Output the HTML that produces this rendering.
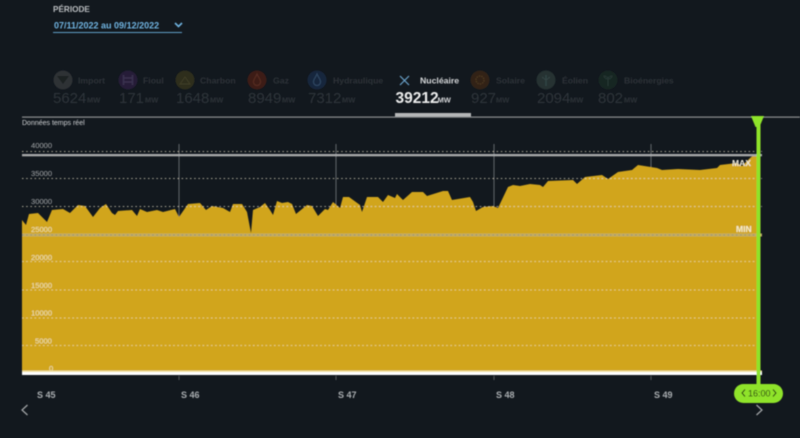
<!DOCTYPE html>
<html lang="fr">
<head>
<meta charset="utf-8">
<style>
html,body{margin:0;padding:0;width:800px;height:438px;overflow:hidden;background:#12181e}
svg{display:block;font-family:"Liberation Sans",sans-serif}
text{white-space:pre}
.lab{font-size:8.700px;font-weight:bold;fill:#2d3338}
.num{font-size:15px;fill:#2f353a}
.mw{font-size:7.500px;font-weight:bold;fill:#2d3338}
.ax{font-size:7.600px;fill:#a3a6a8}
.ax2{font-size:7.600px;fill:#efe3b4}
.wk{font-size:9px;font-weight:bold;fill:#a9adb0}
</style>
</head>
<body>
<svg width="800" height="438" viewBox="0 0 800 438" xmlns="http://www.w3.org/2000/svg">
<defs><filter id="b" x="-5%" y="-5%" width="110%" height="110%"><feGaussianBlur stdDeviation="0.45"/></filter></defs>
<rect width="800" height="438" fill="#12181e"/>
<g filter="url(#b)">
<!-- period -->
<text x="53" y="12" font-size="8.200" font-weight="bold" fill="#b9bcbf">PÉRIODE</text>
<text x="54" y="28.500" font-size="9" font-weight="bold" fill="#6fb3e0">07/11/2022 au 09/12/2022</text>
<path d="M175 23l3.500 3.500 3.500-3.500" fill="none" stroke="#6fb3e0" stroke-width="1.600"/>
<rect x="53" y="32" width="129" height="1" fill="#5f9cc6"/>

<!-- tabs -->
<circle cx="63" cy="80" r="9.500" fill="#2d3135"/><path d="M57 76h12l-6 8z" fill="#1b2024"/>
<circle cx="128" cy="80" r="9.500" fill="#251f38"/><path d="M123.500 75v10M132.500 75v10M123.500 78h9M123.500 82h9" stroke="#3a3350" stroke-width="1.500" fill="none"/>
<circle cx="185" cy="80" r="9.500" fill="#2d2d1c"/><path d="M180 84l5-7 5 7z" fill="none" stroke="#3f3e27" stroke-width="1"/>
<circle cx="257" cy="80" r="9.500" fill="#3e1c16"/><path d="M257 74c1 3 3.500 5 3.500 8a3.500 3.500 0 0 1-7 0c0-3 2.500-5 3.500-8z" fill="none" stroke="#592f25" stroke-width="1"/>
<circle cx="317" cy="80" r="9.500" fill="#18283c"/><path d="M317 74c1 3 3.500 5 3.500 8a3.500 3.500 0 0 1-7 0c0-3 2.500-5 3.500-8z" fill="none" stroke="#324a66" stroke-width="1"/>
<path d="M400 76l9 9M409 76l-9 9" stroke="#6aa3cc" stroke-width="1.200" fill="none"/>
<circle cx="480" cy="80" r="9.500" fill="#322418"/><circle cx="480" cy="80" r="4" fill="none" stroke="#4c3720" stroke-width="1.500" stroke-dasharray="1.500 1"/>
<circle cx="546" cy="80" r="9.500" fill="#263333"/><path d="M546 80v6M546 80l-4-3M546 80l4-3M546 80v-5" stroke="#364646" stroke-width="1" fill="none"/>
<circle cx="608" cy="80" r="9.500" fill="#182523"/><path d="M608 86v-7M608 79c-3 0-4-2-4-3 2 0 4 1 4 3zM608 79c3 0 4-2 4-3-2 0-4 1-4 3z" fill="none" stroke="#273835" stroke-width="1"/>

<text class="lab" x="78" y="83.500">Import</text>
<text class="lab" x="143" y="83.500">Fioul</text>
<text class="lab" x="200" y="83.500">Charbon</text>
<text class="lab" x="273" y="83.500">Gaz</text>
<text class="lab" x="333" y="83.500">Hydraulique</text>
<text x="420" y="83.500" font-size="8.700" font-weight="bold" fill="#d5d7d9">Nucléaire</text>
<text class="lab" x="496" y="83.500">Solaire</text>
<text class="lab" x="562" y="83.500">Éolien</text>
<text class="lab" x="624" y="83.500">Bioénergies</text>

<text class="num" x="53" y="103">5624</text><text class="mw" x="87" y="102.500">MW</text>
<text class="num" x="119" y="103">171</text><text class="mw" x="145" y="102.500">MW</text>
<text class="num" x="176" y="103">1648</text><text class="mw" x="210" y="102.500">MW</text>
<text class="num" x="248" y="103">8949</text><text class="mw" x="282" y="102.500">MW</text>
<text class="num" x="308" y="103">7312</text><text class="mw" x="342" y="102.500">MW</text>
<text x="395.500" y="103" font-size="15.500" fill="#eceded" font-weight="bold">39212</text><text x="437.500" y="102.500" font-size="7.500" font-weight="bold" fill="#d5d7d9">MW</text>
<text class="num" x="471" y="103">927</text><text class="mw" x="496" y="102.500">MW</text>
<text class="num" x="537" y="103">2094</text><text class="mw" x="570" y="102.500">MW</text>
<text class="num" x="598" y="103">802</text><text class="mw" x="624" y="102.500">MW</text>

<rect x="22" y="116.500" width="778" height="1.200" fill="#8d9092"/>
<rect x="395" y="113" width="76" height="3.500" fill="#b5b7b8"/>
<text x="22" y="125" font-size="7" fill="#cfd1d4">Données temps réel</text>

<!-- week verticals -->
<path d="M179 144V217M336 144V205M494 144V206M651 144V167" stroke="#62666a" stroke-width="1" fill="none"/>

<!-- area -->
<path fill="#d1a51e" d="M22 220L26 225L29 214L38 213L47 222L52 210L63 209L70 213L78 205L85 206L93 217L100 208L106 204L112 213L115 215L118 211L132 210L137 216L140 209L147 212L157 210L163 212L175 209L179 217L188 204L200 203L206 210L212 206L223 208L230 212L233 204L242 204L247 212L251 233L253 210L260 207L265 203L270 210L273 215L277 201L282 203L288 202L292 204L296 214L307 205L312 206L318 216L325 209L328 210L333 202L340 208L343 197L349 197L360 205L362 212L367 197L378 197L383 202L388 195L395 198L397 194L403 200L412 192L423 192L427 196L443 191L448 191L452 200L470 197L473 202L476 211L483 207L493 206L498 208L508 187L513 185L520 186L530 184L540 185L543 187L548 181L573 180L577 184L585 177L602 175L608 179L618 172L632 170L638 165L657 168L662 170L678 169L700 170L717 168L720 165L737 163L742 166L750 158L755 154L758 154V372H22Z"/>

<!-- grid -->
<g fill="none" stroke-width="1" stroke-dasharray="1.500 2.700">
<path d="M22 151.500H762M22 178.500H762M22 206.500H762" stroke="#e9e2c8" opacity=".7"/>
<path d="M22 290H757M22 318H757M22 345.500H757M22 261.500H757" stroke="#efe3b0" opacity=".7"/>
</g>
<rect x="22" y="154" width="740" height="2.300" fill="#a7a9aa"/>
<rect x="22" y="233.500" width="740" height="3" fill="#c4ad5e"/>
<path d="M22 235H762" stroke="#8f8f80" stroke-width="1" stroke-dasharray="1.500 2.700" fill="none"/>

<!-- y labels -->
<text class="ax" x="31" y="148">40000</text>
<text class="ax" x="31" y="176">35000</text>
<text class="ax" x="31" y="204">30000</text>
<text class="ax2" x="31" y="232">25000</text>
<text class="ax2" x="31" y="260">20000</text>
<text class="ax2" x="31" y="288">15000</text>
<text class="ax2" x="31" y="315.500">10000</text>
<text class="ax2" x="35" y="343.500">5000</text>
<text class="ax2" x="49" y="371">0</text>

<text x="732" y="166" font-size="8.500" font-weight="bold" fill="#efeadb">MAX</text>
<text x="736" y="232" font-size="8.500" font-weight="bold" fill="#f5eecf">MIN</text>

<!-- baseline -->
<rect x="22" y="370.500" width="740" height="1.500" fill="#f0e0a0"/>
<rect x="22" y="372" width="740" height="3" fill="#ffffff"/>
<path d="M179 376v4M336 376v4M494 376v4M651 376v4" stroke="#54585c" fill="none"/>

<!-- weeks -->
<text class="wk" x="37" y="398">S 45</text>
<text class="wk" x="181" y="398">S 46</text>
<text class="wk" x="338" y="398">S 47</text>
<text class="wk" x="496" y="398">S 48</text>
<text class="wk" x="654" y="398">S 49</text>

<!-- nav -->
<path d="M27.500 405l-5.500 5 5.500 5" fill="none" stroke="#a5a8aa" stroke-width="1.200"/>
<path d="M756.500 405l5.500 5-5.500 5" fill="none" stroke="#a5a8aa" stroke-width="1.200"/>

<!-- cursor -->
<path d="M751 116h13l-4.500 11h-4z" fill="#8fe32a"/>
<rect x="756.500" y="120" width="4" height="265" fill="#8fe32a"/>
<rect x="734" y="384" width="49" height="19" rx="9.500" fill="#8fe32a"/>
<rect x="757" y="375" width="3" height="11" fill="#8fe32a"/>
<path d="M745 389.500l-3 3.500 3 3.500M773 389.500l3 3.500-3 3.500" fill="none" stroke="#1d2b10" stroke-width="1"/>
<text x="748" y="396.500" font-size="9" fill="#1d2b10">16:00</text>
</g>
</svg>
</body>
</html>
